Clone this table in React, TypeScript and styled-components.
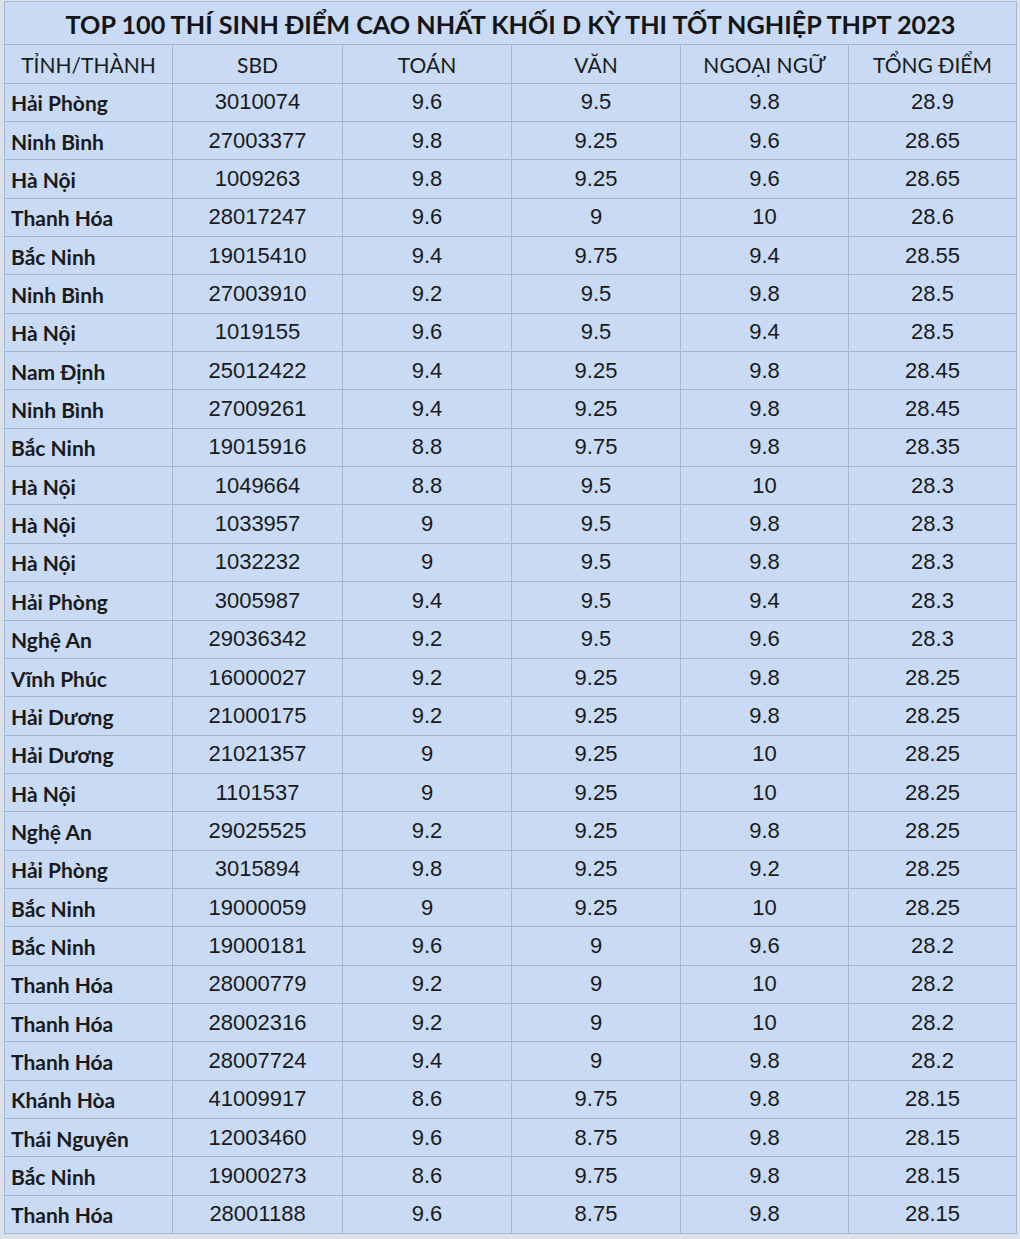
import { createGlobalStyle } from "styled-components";
import styled from "styled-components";

const GlobalStyle = createGlobalStyle`
  html, body {
    margin: 0;
    padding: 0;
    background: #dde2ea;
  }
`;

type Row = [string, string, string, string, string, string];

const rows: Row[] = [
  ["Hải Phòng", "3010074", "9.6", "9.5", "9.8", "28.9"],
  ["Ninh Bình", "27003377", "9.8", "9.25", "9.6", "28.65"],
  ["Hà Nội", "1009263", "9.8", "9.25", "9.6", "28.65"],
  ["Thanh Hóa", "28017247", "9.6", "9", "10", "28.6"],
  ["Bắc Ninh", "19015410", "9.4", "9.75", "9.4", "28.55"],
  ["Ninh Bình", "27003910", "9.2", "9.5", "9.8", "28.5"],
  ["Hà Nội", "1019155", "9.6", "9.5", "9.4", "28.5"],
  ["Nam Định", "25012422", "9.4", "9.25", "9.8", "28.45"],
  ["Ninh Bình", "27009261", "9.4", "9.25", "9.8", "28.45"],
  ["Bắc Ninh", "19015916", "8.8", "9.75", "9.8", "28.35"],
  ["Hà Nội", "1049664", "8.8", "9.5", "10", "28.3"],
  ["Hà Nội", "1033957", "9", "9.5", "9.8", "28.3"],
  ["Hà Nội", "1032232", "9", "9.5", "9.8", "28.3"],
  ["Hải Phòng", "3005987", "9.4", "9.5", "9.4", "28.3"],
  ["Nghệ An", "29036342", "9.2", "9.5", "9.6", "28.3"],
  ["Vĩnh Phúc", "16000027", "9.2", "9.25", "9.8", "28.25"],
  ["Hải Dương", "21000175", "9.2", "9.25", "9.8", "28.25"],
  ["Hải Dương", "21021357", "9", "9.25", "10", "28.25"],
  ["Hà Nội", "1101537", "9", "9.25", "10", "28.25"],
  ["Nghệ An", "29025525", "9.2", "9.25", "9.8", "28.25"],
  ["Hải Phòng", "3015894", "9.8", "9.25", "9.2", "28.25"],
  ["Bắc Ninh", "19000059", "9", "9.25", "10", "28.25"],
  ["Bắc Ninh", "19000181", "9.6", "9", "9.6", "28.2"],
  ["Thanh Hóa", "28000779", "9.2", "9", "10", "28.2"],
  ["Thanh Hóa", "28002316", "9.2", "9", "10", "28.2"],
  ["Thanh Hóa", "28007724", "9.4", "9", "9.8", "28.2"],
  ["Khánh Hòa", "41009917", "8.6", "9.75", "9.8", "28.15"],
  ["Thái Nguyên", "12003460", "9.6", "8.75", "9.8", "28.15"],
  ["Bắc Ninh", "19000273", "8.6", "9.75", "9.8", "28.15"],
  ["Thanh Hóa", "28001188", "9.6", "8.75", "9.8", "28.15"],
];

const headers = ["TỈNH/THÀNH", "SBD", "TOÁN", "VĂN", "NGOẠI NGỮ", "TỔNG ĐIỂM"];

const Sheet = styled.div`
  height: 1239px;
  padding: 1px 4px 0 4px;
  box-sizing: border-box;
  overflow: hidden;
`;

const Grid = styled.div`
  width: 1012px;
  display: grid;
  grid-template-columns: 168px 170px 169px 169px 168px 168px;
  grid-template-rows: 43px 38.7px repeat(30, 38.35px);
  background: #c8daf4;
  border-top: 1px solid #a6b6cf;
  border-left: 1px solid #a6b6cf;
`;

const Title = styled.div`
  grid-column: 1 / -1;
  display: flex;
  align-items: center;
  justify-content: center;
  border-right: 1px solid #a6b6cf;
  border-bottom: 1px solid #a6b6cf;
  font-family: Lato, "Liberation Sans", sans-serif;
  font-weight: 700;
  font-size: 25.2px;
  color: #141414;
  padding-top: 1px;
`;

const Cell = styled.div<{ $kind: "head" | "name" | "num" }>`
  display: flex;
  align-items: center;
  justify-content: ${(p) => (p.$kind === "name" ? "flex-start" : "center")};
  padding-left: ${(p) => (p.$kind === "name" ? "6px" : "0")};
  border-right: 1px solid #a6b6cf;
  border-bottom: 1px solid #a6b6cf;
  color: #1a1a1a;
  white-space: nowrap;
  font-family: ${(p) =>
    p.$kind === "num" ? `"Liberation Sans", Arial, sans-serif` : `Lato, "Liberation Sans", sans-serif`};
  font-weight: ${(p) => (p.$kind === "name" ? 700 : 400)};
  font-size: ${(p) => (p.$kind === "num" ? "22px" : "21px")};
  padding-top: ${(p) => (p.$kind === "num" ? "0" : "1px")};
`;

export default function App() {
  return (
    <>
      <GlobalStyle />
      <Sheet>
        <Grid>
          <Title>TOP 100 THÍ SINH ĐIỂM CAO NHẤT KHỐI D KỲ THI TỐT NGHIỆP THPT 2023</Title>
          {headers.map((h) => (
            <Cell key={h} $kind="head">
              {h}
            </Cell>
          ))}
          {rows.map((r, i) =>
            r.map((v, j) => (
              <Cell key={`${i}-${j}`} $kind={j === 0 ? "name" : "num"}>
                {v}
              </Cell>
            ))
          )}
        </Grid>
      </Sheet>
    </>
  );
}
